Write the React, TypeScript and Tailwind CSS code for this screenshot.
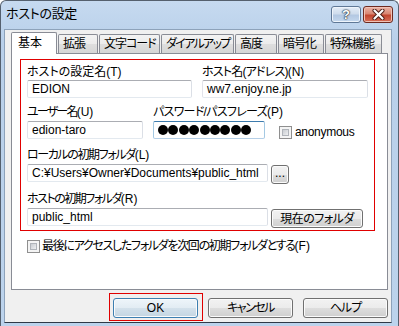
import type { ReactNode } from 'react';

const tabs = [
    { label: '拡張', w: 'w-[40px]', t: 'tracking-[-1px]' },
    { label: '文字コード', w: 'w-[61px]', t: 'tracking-[-1px]' },
    { label: 'ダイアルアップ', w: 'w-[73px]', t: 'tracking-[-1.7px]' },
    { label: '高度', w: 'w-[42px]', t: 'tracking-[-1px]' },
    { label: '暗号化', w: 'w-[46px]', t: 'tracking-[-1px]' },
    { label: '特殊機能', w: 'w-[57px]', t: 'tracking-[-1px]' },
];

function TextBox({ className = '', focused = false, children }: { className?: string; focused?: boolean; children?: ReactNode }) {
    return (
        <div
            className={`flex h-[18px] items-center rounded-[2px] border bg-white px-[4px] text-[12px] leading-[14px] text-black ${
                focused
                    ? 'border-[#3d7bad] border-b-[#b5cfe7] border-l-[#a4c9e3] border-r-[#a4c9e3]'
                    : 'border-[#abadb3] border-b-[#e3e9ef] border-l-[#e2e3ea] border-r-[#dbdfe6]'
            } ${className}`}
        >
            {children}
        </div>
    );
}

function PushButton({ className = '', primary = false, children }: { className?: string; primary?: boolean; children: ReactNode }) {
    return (
        <div
            className={`flex items-center justify-center whitespace-nowrap rounded-[3px] border text-[12px] leading-[14px] text-black shadow-[inset_0_0_0_1px_#fbfbfb] ${
                primary
                    ? 'border-[#3c7fb1] bg-[linear-gradient(to_bottom,#eef5fa_0%,#e2ecf3_50%,#d3e1eb_51%,#c3d5e2_100%)] shadow-[inset_0_0_0_1px_#c8e7f9]'
                    : 'border-[#707070] bg-[linear-gradient(to_bottom,#f2f2f2_0%,#ebebeb_50%,#dddddd_51%,#cfcfcf_100%)]'
            } ${className}`}
        >
            {children}
        </div>
    );
}

function CheckBox() {
    return (
        <div className="h-[13px] w-[13px] shrink-0 border border-[#8f8f8f] bg-[#f4f4f4] p-[2px]">
            <div className="h-full w-full border border-[#b0b4ba] bg-[linear-gradient(135deg,#c9ccd1,#eeeff1)]" />
        </div>
    );
}

// japanese part gets squeezed, the (X) accelerator part stays as is
function Label({ text, hotkey, tight = '' }: { text: string; hotkey: string; tight?: string }) {
    return (
        <div className="h-[14px] whitespace-nowrap text-[12px] leading-[14px] text-black">
            <span className={tight}>{text}</span>({hotkey})
        </div>
    );
}

export default function App() {
    return (
        <div className="flex h-[326px] w-[399px] flex-col overflow-hidden rounded-t-[6px] border border-b-0 border-[#55606e] bg-[linear-gradient(to_bottom,#c6daf0,#b9d0ea_40px,#bcd3ec)] font-['Liberation_Sans','Noto_Sans_CJK_JP',sans-serif] [font-feature-settings:'palt']">
            {/* title bar */}
            <div className="flex h-[28px] shrink-0 items-start pl-[5px] pr-[5px]">
                <div className="pt-[5px] text-[13px] leading-[16px] tracking-[-0.3px] text-black">ホストの設定</div>
                <div className="ml-auto mt-[5px] flex gap-[2px]">
                    <div className="flex h-[17px] w-[30px] items-center justify-center rounded-[3px] border border-[#5f7896] bg-[linear-gradient(to_bottom,#e4edf8_0%,#cfdcec_45%,#b3c8e2_55%,#c4d8ee_100%)] shadow-[inset_0_0_0_1px_#eef4fb]">
                        <span className="text-[13px] font-bold leading-[13px] text-white [text-shadow:0_0_1px_#1d2b3c,0_0_1px_#1d2b3c,0_0_2px_#1d2b3c]">?</span>
                    </div>
                    <div className="flex h-[17px] w-[30px] items-center justify-center rounded-[3px] border border-[#6e2a20] bg-[linear-gradient(to_bottom,#eab4a7_0%,#d98672_45%,#c2462f_55%,#d7705a_100%)] shadow-[inset_0_0_0_1px_#f0c2b6]">
                        <svg width="13" height="11" viewBox="0 0 13 11" aria-hidden="true">
                            <path d="M2.5 1.5 L10.5 9.5 M10.5 1.5 L2.5 9.5" stroke="#4a1a12" strokeWidth="4" strokeLinecap="round" />
                            <path d="M2.5 1.5 L10.5 9.5 M10.5 1.5 L2.5 9.5" stroke="#ffffff" strokeWidth="2.2" strokeLinecap="round" />
                        </svg>
                    </div>
                </div>
            </div>

            {/* client area */}
            <div className="mb-[3px] ml-[3px] mr-[6px] flex flex-1 flex-col border border-[#8da2ba] border-b-[#2f3947] bg-[#f0f0f0] pl-[6px] pt-[2px]">
                {/* tabs */}
                <div className="relative z-10 flex h-[21px] items-end">
                    <div className="-mb-[1px] h-[22px] w-[46px] rounded-t-[2px] border border-b-0 border-[#898c95] bg-white pl-[6px] pt-[3px] text-[12px] leading-[14px] text-black">
                        基本
                    </div>
                    {tabs.map((t) => (
                        <div
                            key={t.label}
                            className={`ml-[1px] h-[19px] ${t.w} ${t.t} overflow-hidden whitespace-nowrap rounded-t-[2px] border border-b-0 border-[#898c95] bg-[linear-gradient(to_bottom,#f3f3f3_0%,#ebebeb_50%,#dedede_51%,#d6d6d6_100%)] pl-[4px] pt-[2px] text-[12px] leading-[14px] text-black`}
                        >
                            {t.label}
                        </div>
                    ))}
                </div>

                {/* tab page */}
                <div className="flex h-[237px] w-[377px] flex-col border border-[#898c95] bg-white">
                    <div className="ml-[8px] mt-[5px] h-[172px] w-[355px] border border-[#e00000] pl-[6px] pt-[5px]">
                        <div className="flex gap-[10px]">
                            <div className="w-[165px]">
                                <Label text="ホストの設定名" hotkey="T" />
                                <TextBox className="mt-[1px]">EDION</TextBox>
                            </div>
                            <div className="w-[166px]">
                                <Label text="ホスト名(アドレス)" hotkey="N" tight="tracking-[-0.8px]" />
                                <TextBox className="mt-[1px]">ww7.enjoy.ne.jp</TextBox>
                            </div>
                        </div>

                        <div className="mt-[7px] flex items-end gap-[10px]">
                            <div className="w-[116px]">
                                <Label text="ユーザー名" hotkey="U" tight="tracking-[-1.8px]" />
                                <TextBox className="mt-[2px]">edion-taro</TextBox>
                            </div>
                            <div className="w-[112px]">
                                <Label text="パスワード/パスフレーズ" hotkey="P" tight="tracking-[-0.7px]" />
                                <TextBox className="mt-[2px] gap-[0.4px] pl-[4px]" focused>
                                    {Array.from({ length: 9 }).map((_, i) => (
                                        <span key={i} className="h-[10px] w-[10px] shrink-0 rounded-full bg-black" />
                                    ))}
                                </TextBox>
                            </div>
                            <div className="ml-[4px] flex items-center gap-[3px]">
                                <CheckBox />
                                <span className="text-[12px] leading-[14px] tracking-[-0.3px] text-black">anonymous</span>
                            </div>
                        </div>

                        <div className="mt-[9px]">
                            <Label text="ローカルの初期フォルダ" hotkey="L" tight="tracking-[-1.4px]" />
                            <div className="mt-[2px] flex items-start gap-[3px]">
                                <TextBox className="w-[241px] whitespace-nowrap">C:¥Users¥Owner¥Documents¥public_html</TextBox>
                                <PushButton className="mt-[1px] h-[19px] w-[18px] pb-[3px]">...</PushButton>
                            </div>
                        </div>

                        <div className="mt-[8px]">
                            <Label text="ホストの初期フォルダ" hotkey="R" tight="tracking-[-1.5px]" />
                            <div className="mt-[2px] flex items-start gap-[3px]">
                                <TextBox className="w-[241px]">public_html</TextBox>
                                <PushButton className="mt-[1px] h-[19px] w-[92px] tracking-[-0.5px]">現在のフォルダ</PushButton>
                            </div>
                        </div>
                    </div>

                    <div className="ml-[15px] mt-[8px] flex items-center gap-[2px]">
                        <CheckBox />
                        <span className="whitespace-nowrap text-[12px] leading-[14px] text-black">
                            <span className="tracking-[-1.3px]">最後にアクセスしたフォルダを次回の初期フォルダとする</span>(F)
                        </span>
                    </div>
                </div>

                {/* dialog buttons */}
                <div className="mt-[8px] flex justify-end gap-[10px] pr-[3px]">
                    <div className="relative">
                        <PushButton className="h-[20px] w-[85px]" primary>
                            OK
                        </PushButton>
                        <div className="pointer-events-none absolute -bottom-[3px] -left-[4px] -right-[5px] -top-[5px] border border-[#e00000]" />
                    </div>
                    <PushButton className="h-[20px] w-[85px] tracking-[-1.5px]">キャンセル</PushButton>
                    <PushButton className="h-[20px] w-[85px] tracking-[-1px]">ヘルプ</PushButton>
                </div>
            </div>
        </div>
    );
}
